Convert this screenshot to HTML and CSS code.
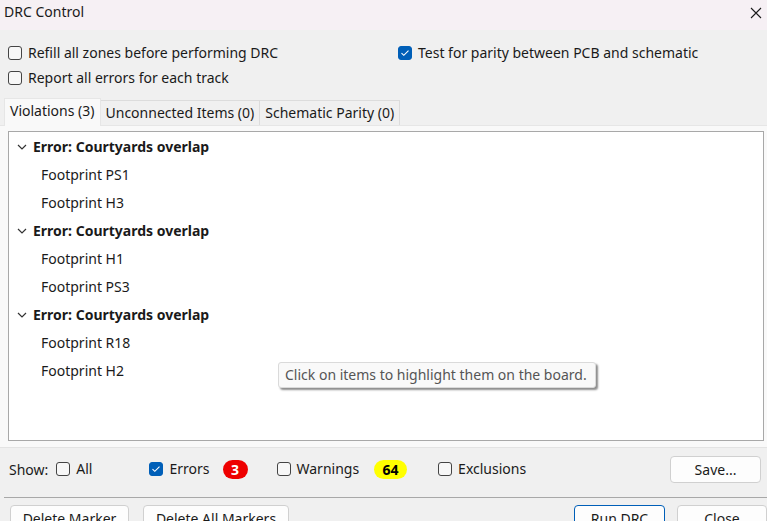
FILE: index.html
```html
<!DOCTYPE html>
<html>
<head>
<meta charset="utf-8">
<link rel="stylesheet" href="styles.css">
</head>
<body>
<div class="window">
  <div class="titlebar">
    <span class="title">DRC Control</span>
    <svg class="close" width="12" height="12" viewBox="0 0 12 12"><path d="M1 1L11 11M11 1L1 11" stroke="#1a1a1a" stroke-width="1.1"/></svg>
  </div>
  <div class="options">
    <label class="opt"><span class="cb"></span>Refill all zones before performing DRC</label>
    <label class="opt"><span class="cb on"><svg width="10" height="8" viewBox="0 0 10 8"><path d="M1.5 4.2L3.8 6.3L8.5 1.6" fill="none" stroke="#fff" stroke-width="1.1"/></svg></span>Test for parity between PCB and schematic</label>
    <label class="opt"><span class="cb"></span>Report all errors for each track</label>
  </div>
  <div class="tabs">
    <div class="tab active">Violations (3)</div>
    <div class="tab">Unconnected Items (0)</div>
    <div class="tab">Schematic Parity (0)</div>
  </div>
  <div class="tabpanel">
    <div class="list">
      <div class="row head"><svg class="chev" width="10" height="6" viewBox="0 0 10 6"><path d="M1 1L5 5L9 1" fill="none" stroke="#333" stroke-width="1.2"/></svg>Error: Courtyards overlap</div>
      <div class="row child">Footprint PS1</div>
      <div class="row child">Footprint H3</div>
      <div class="row head"><svg class="chev" width="10" height="6" viewBox="0 0 10 6"><path d="M1 1L5 5L9 1" fill="none" stroke="#333" stroke-width="1.2"/></svg>Error: Courtyards overlap</div>
      <div class="row child">Footprint H1</div>
      <div class="row child">Footprint PS3</div>
      <div class="row head"><svg class="chev" width="10" height="6" viewBox="0 0 10 6"><path d="M1 1L5 5L9 1" fill="none" stroke="#333" stroke-width="1.2"/></svg>Error: Courtyards overlap</div>
      <div class="row child">Footprint R18</div>
      <div class="row child">Footprint H2</div>
      <div class="tooltip">Click on items to highlight them on the board.</div>
    </div>
  </div>
  <div class="showrow">
    <span class="showlbl">Show:</span>
    <label class="opt f-all"><span class="cb"></span>All</label>
    <label class="opt f-err"><span class="cb on"><svg width="10" height="8" viewBox="0 0 10 8"><path d="M1.5 4.2L3.8 6.3L8.5 1.6" fill="none" stroke="#fff" stroke-width="1.1"/></svg></span>Errors</label>
    <span class="badge red">3</span>
    <label class="opt f-warn"><span class="cb"></span>Warnings</label>
    <span class="badge yellow">64</span>
    <label class="opt f-exc"><span class="cb"></span>Exclusions</label>
    <button class="btn save">Save...</button>
  </div>
  <div class="sep"></div>
  <div class="buttons">
    <button class="btn b-dm">Delete Marker</button>
    <button class="btn b-dam">Delete All Markers</button>
    <span class="spacer"></span>
    <button class="btn b-run">Run DRC</button>
    <button class="btn b-close">Close</button>
  </div>
</div>
</body>
</html>
```
FILE: styles.css
```css
html, body {
  margin: 0;
  padding: 0;
}
body {
  width: 767px;
  height: 521px;
  overflow: hidden;
  background: #f0f0f0;
  font-family: "Noto Sans", "Open Sans", sans-serif;
  font-size: 14px;
  color: #1a1a1a;
}
.window {
  display: flex;
  flex-direction: column;
  height: 521px;
}
.titlebar {
  height: 30px;
  background: #f6f0f4;
  display: flex;
  align-items: flex-start;
  justify-content: space-between;
  padding: 2px 5px 0 4px;
  box-sizing: border-box;
  flex: none;
}
.title {
  font-size: 14px;
  line-height: 20px;
}
.close {
  margin-top: 5px;
}
.options {
  display: grid;
  grid-template-columns: 390px 1fr;
  row-gap: 5px;
  padding: 13px 0 0 8px;
  height: 58px;
  box-sizing: border-box;
  flex: none;
}
.opt {
  display: flex;
  align-items: center;
  white-space: nowrap;
  line-height: 20px;
}
.cb {
  width: 12px;
  height: 12px;
  border: 1px solid #444;
  border-radius: 3px;
  margin-right: 6px;
  background: #f7f7f7;
  display: inline-flex;
  align-items: center;
  justify-content: center;
  flex: none;
}
.cb.on {
  background: #005fb8;
  border-color: #005fb8;
}
.tabs {
  display: flex;
  padding: 0 0 0 4px;
  height: 37px;
  box-sizing: border-box;
  align-items: flex-end;
  flex: none;
  position: relative;
}
.tab {
  height: 25px;
  line-height: 24px;
  padding: 0 5px;
  border: 1px solid #dcdcdc;
  border-bottom: none;
  box-sizing: border-box;
  background: #f0f0f0;
  margin-left: -1px;
}
.tab.active {
  height: 28px;
  line-height: 24px;
  background: #f9f9f9;
  padding: 0 5px 3px 5px;
  border-color: #e6e6e6;
  margin-left: 0;
  position: relative;
  z-index: 1;
  margin-bottom: -1px;
}
.tabpanel {
  background: #f9f9f9;
  padding: 5px 3px 6px 8px;
  height: 322px;
  box-sizing: border-box;
  border-top: 1px solid #e6e6e6;
  flex: none;
}
.list {
  background: #fff;
  border: 1px solid #a8a8a8;
  height: 310px;
  box-sizing: border-box;
  position: relative;
  padding-top: 1px;
}
.row {
  height: 28px;
  line-height: 28px;
  white-space: nowrap;
}
.row.head {
  font-weight: bold;
  padding-left: 8px;
  display: flex;
  align-items: center;
}
.chev {
  margin-right: 6px;
}
.row.child {
  padding-left: 32px;
}
.tooltip {
  position: absolute;
  left: 269px;
  top: 230px;
  width: 318px;
  height: 26px;
  box-sizing: border-box;
  border: 1px solid #dadada;
  border-radius: 3px;
  background: #f9f9f9;
  color: #555;
  line-height: 23px;
  padding-left: 6px;
  box-shadow: 2px 2px 2px rgba(0,0,0,0.45);
  font-size: 14px;
}
.showrow {
  display: flex;
  align-items: center;
  height: 43px;
  padding: 0 6px 0 9px;
  box-sizing: border-box;
  border-top: 1px solid #e3e3e3;
  flex: none;
}
.showlbl {
  margin-right: 8px;
}
.f-all { margin-right: 57px; }
.f-err { margin-right: 13px; }
.badge {
  display: inline-block;
  border-radius: 10px;
  font-weight: bold;
  text-align: center;
  height: 19px;
  line-height: 19px;
}
.badge.red {
  background: #ee0000;
  color: #fff;
  width: 25px;
  margin-right: 29px;
}
.badge.yellow {
  background: #ffff00;
  color: #000;
  width: 33px;
  margin-left: 15px;
  margin-right: 31px;
}
.btn {
  font-family: inherit;
  font-size: 14px;
  color: #1a1a1a;
  background: #fdfdfd;
  border: 1px solid #d0d0d0;
  border-radius: 4px;
  height: 27px;
  padding: 0;
}
.save {
  margin-left: auto;
  width: 91px;
}
.sep {
  height: 1px;
  background: #a8a8a8;
  margin: 7px 0 0 4px;
  flex: none;
}
.buttons {
  display: flex;
  padding: 7px 0 0 10px;
  gap: 14px;
}
.spacer { flex: 1; }
.b-dm { width: 119px; }
.b-dam { width: 146px; }
.b-run { width: 91px; border-color: #005fb8; }
.b-close { width: 90px; margin-left: -2px; }
```
